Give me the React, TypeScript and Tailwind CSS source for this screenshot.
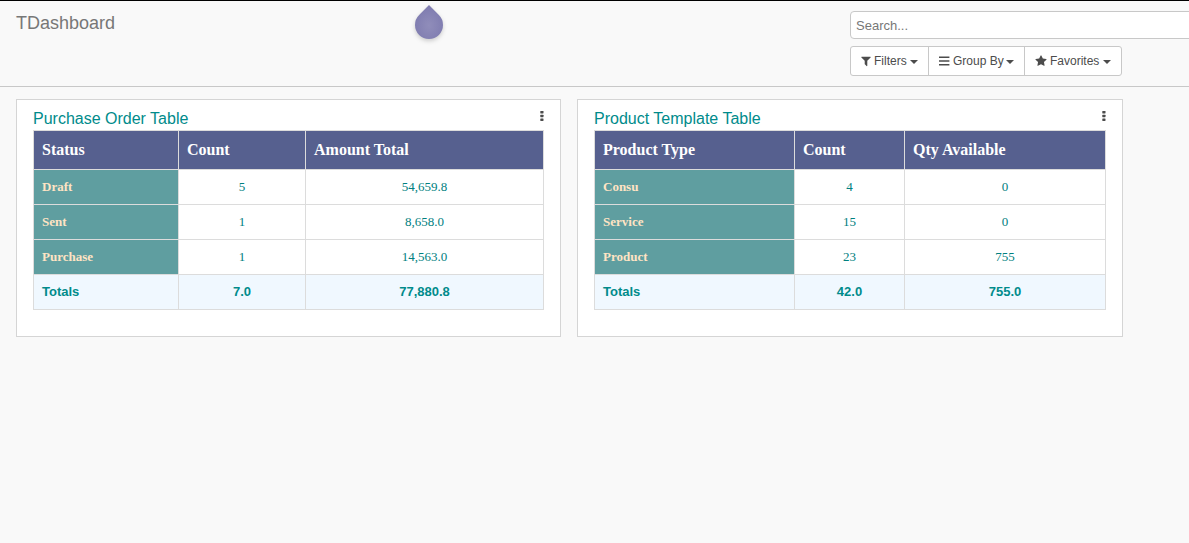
import React from "react";

type TableData = {
  title: string;
  width: string;
  columns: { label: string; width: string }[];
  rows: string[][];
  totals: string[];
};

const purchase: TableData = {
  title: "Purchase Order Table",
  width: "w-[545px]",
  columns: [
    { label: "Status", width: "w-[145px]" },
    { label: "Count", width: "w-[127px]" },
    { label: "Amount Total", width: "w-[238px]" },
  ],
  rows: [
    ["Draft", "5", "54,659.8"],
    ["Sent", "1", "8,658.0"],
    ["Purchase", "1", "14,563.0"],
  ],
  totals: ["Totals", "7.0", "77,880.8"],
};

const product: TableData = {
  title: "Product Template Table",
  width: "w-[546px]",
  columns: [
    { label: "Product Type", width: "w-[200px]" },
    { label: "Count", width: "w-[110px]" },
    { label: "Qty Available", width: "w-[201px]" },
  ],
  rows: [
    ["Consu", "4", "0"],
    ["Service", "15", "0"],
    ["Product", "23", "755"],
  ],
  totals: ["Totals", "42.0", "755.0"],
};

const serif = "font-['Liberation_Serif',serif]";
const cell = "border-r border-b border-[#dcdcdc] p-0";

function Dots() {
  return (
    <svg className="mt-[11px] h-[10px] w-[4px]" viewBox="0 0 4 10" fill="#4c4c4c">
      <rect x="0.3" y="0" width="3.2" height="2.5" rx="0.4" />
      <rect x="0.3" y="3.8" width="3.2" height="2.4" rx="0.4" />
      <rect x="0.3" y="7.5" width="3.2" height="2.5" rx="0.4" />
    </svg>
  );
}

function Card({ data }: { data: TableData }) {
  return (
    <section className={`h-[238px] border border-[#d5d5d5] bg-white px-4 ${data.width}`}>
      <div className="flex h-[30px] justify-between">
        <h2 className="pt-[7px] text-[16px] leading-6 text-[#008b8b]">{data.title}</h2>
        <Dots />
      </div>
      <table className="w-full table-fixed border-separate border-spacing-0 border-t border-l border-[#dcdcdc]">
        <thead>
          <tr className="h-[39px]">
            {data.columns.map((c) => (
              <th
                key={c.label}
                className={`${cell} ${c.width} ${serif} bg-[#56608f] pl-2 text-left text-[16px] leading-5 font-bold text-white`}
              >
                {c.label}
              </th>
            ))}
          </tr>
        </thead>
        <tbody>
          {data.rows.map((r) => (
            <tr key={r[0]} className="h-[35px]">
              <td className={`${cell} ${serif} bg-[#5f9ea0] pl-2 text-[13px] leading-5 font-bold text-[#ffe4c4]`}>{r[0]}</td>
              {r.slice(1).map((v, i) => (
                <td key={i} className={`${cell} ${serif} text-center text-[13px] leading-5 text-[#008080]`}>
                  {v}
                </td>
              ))}
            </tr>
          ))}
          <tr className="h-[35px] bg-[#f0f8ff] text-[13px] leading-5 font-bold text-[#008b8b]">
            {data.totals.map((v, i) => (
              <td key={i} className={`${cell} ${i === 0 ? "pl-2 text-left" : "text-center"}`}>
                {v}
              </td>
            ))}
          </tr>
        </tbody>
      </table>
    </section>
  );
}

function Caret({ gap }: { gap: string }) {
  return (
    <svg className={`mt-[2px] h-1 w-2 ${gap}`} viewBox="0 0 8 4" fill="#4c4c4c">
      <path d="M0 0h8L4 4z" />
    </svg>
  );
}

function Icon({ d, gap }: { d: string; gap: string }) {
  return (
    <svg className={`h-3 w-3 ${gap}`} viewBox="0 0 1792 1792" fill="#4c4c4c">
      <path d={d} />
    </svg>
  );
}

const FILTER =
  "M1595 295q17 41-14 70l-493 493v742q0 42-39 59-13 5-25 5-27 0-45-19l-256-256q-19-19-19-45v-486l-493-493q-31-29-14-70 17-39 59-39h1280q42 0 59 39z";
const STAR =
  "M1728 647q0 22-26 48l-363 354 86 500q1 7 1 20 0 21-10.5 35.5t-30.5 14.5q-19 0-40-12l-449-236-449 236q-22 12-40 12-21 0-31.5-14.5t-10.5-35.5q0-6 2-20l86-500-364-354q-25-27-25-48 0-37 56-46l502-73 225-455q19-41 49-41t49 41l225 455 502 73q56 9 56 46z";

export default function App() {
  return (
    <div className="h-[543px] w-full overflow-hidden border-t border-black bg-[#f9f9f9] font-['Liberation_Sans',Arial,sans-serif]">
      <header className="relative flex h-[86px] justify-between border-b border-[#c8c8c8]">
        <h1 className="pt-[10px] pl-4 text-[18px] leading-6 text-[#777777]">TDashboard</h1>
        <svg className="absolute top-[2px] left-[411px] h-[42px] w-9 overflow-visible" viewBox="0 0 36 42">
          <defs>
            <radialGradient id="drop" cx="50%" cy="60%" r="55%">
              <stop offset="0" stopColor="#908dba" />
              <stop offset="1" stopColor="#7f7cb0" />
            </radialGradient>
          </defs>
          <path
            d="M18 2L27.9 12.1A14 14 0 1 1 8.1 12.1Z"
            fill="url(#drop)"
            className="drop-shadow-[0_2px_2px_rgba(0,0,0,0.18)]"
          />
        </svg>
        <div className="w-[339px]">
          <div className="mt-[10px] flex h-7 w-[360px] items-center rounded-[4px] border border-[#c8c8c8] bg-white pt-px pl-[5px] text-[13px] text-[#777777]">
            Search...
          </div>
          <div className="mt-[7px] flex h-[30px] w-[272px] divide-x divide-[#c8c8c8] rounded-[3px] border border-[#c8c8c8] bg-white text-[12px] text-[#4c4c4c]">
            <div className="flex w-[78px] items-center pl-[9px]">
              <Icon d={FILTER} gap="mr-[2px]" />
              Filters
              <Caret gap="ml-[3px]" />
            </div>
            <div className="flex w-24 items-center pl-[10px]">
              <svg className="mr-[3px] h-[10px] w-[11px]" viewBox="0 0 11 10" fill="#4c4c4c">
                <path d="M0 .5h10.4v1.6H0zM0 4.2h10.4v1.6H0zM0 7.9h10.4v1.6H0z" />
              </svg>
              Group By
              <Caret gap="ml-[2px]" />
            </div>
            <div className="flex flex-1 items-center pl-[10px]">
              <Icon d={STAR} gap="mr-[3px]" />
              Favorites
              <Caret gap="ml-1" />
            </div>
          </div>
        </div>
      </header>
      <main className="flex gap-4 pt-3 pl-4">
        <Card data={purchase} />
        <Card data={product} />
      </main>
    </div>
  );
}
